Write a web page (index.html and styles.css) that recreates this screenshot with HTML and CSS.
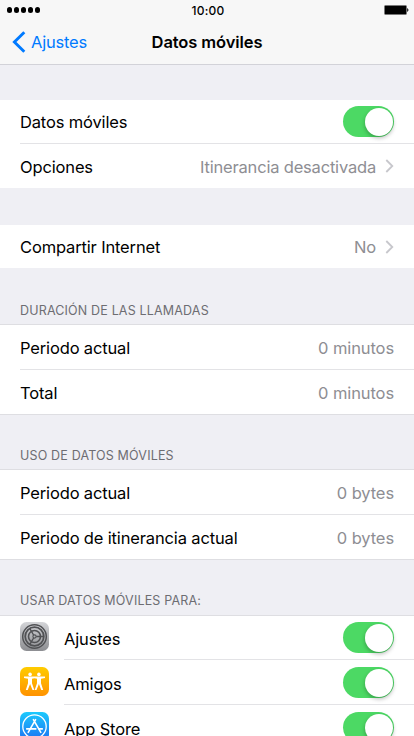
FILE: index.html
```html
<!DOCTYPE html>
<html lang="es">
<head>
<meta charset="utf-8">
<title>Datos móviles</title>
<link rel="stylesheet" href="styles.css">
</head>
<body>
<header class="top">
  <div class="status">
    <span class="signal"><i></i><i></i><i></i><i></i><i></i></span>
    <span class="time">10:00</span>
    <svg class="battery" width="25" height="10" viewBox="0 0 25 10"><rect x=".5" y=".5" width="22" height="9" rx="1" fill="#000" stroke="#777"/><path d="M23.5 3.5Q25 5 23.5 6.5Z" fill="#000" stroke="#000" stroke-width=".5"/></svg>
  </div>
  <nav class="nav">
    <a class="back"><svg width="14" height="22" viewBox="0 0 14 22"><path d="M12.3 1.2 2.4 11l9.9 9.8" fill="none" stroke="#007aff" stroke-width="2.9"/></svg><span>Ajustes</span></a>
    <h1>Datos móviles</h1>
  </nav>
</header>
<main>
  <section class="group first">
    <div class="row"><span class="label">Datos móviles</span><span class="toggle"></span></div>
    <div class="row"><span class="label">Opciones</span><span class="value roam">Itinerancia desactivada</span><svg class="chevron" width="9" height="14" viewBox="0 0 9 14"><path d="m1.3 1 6 6-6 6" fill="none" stroke="#c7c7cc" stroke-width="1.8"/></svg></div>
  </section>
  <section class="group share">
    <div class="row"><span class="label">Compartir Internet</span><span class="value">No</span><svg class="chevron" width="9" height="14" viewBox="0 0 9 14"><path d="m1.3 1 6 6-6 6" fill="none" stroke="#c7c7cc" stroke-width="1.8"/></svg></div>
  </section>
  <h2 class="calls-title">DURACIÓN DE LAS LLAMADAS</h2>
  <section class="group lined">
    <div class="row"><span class="label">Periodo actual</span><span class="value">0 minutos</span></div>
    <div class="row"><span class="label">Total</span><span class="value">0 minutos</span></div>
  </section>
  <h2 class="data-title">USO DE DATOS MÓVILES</h2>
  <section class="group lined">
    <div class="row"><span class="label">Periodo actual</span><span class="value">0 bytes</span></div>
    <div class="row"><span class="label">Periodo de itinerancia actual</span><span class="value">0 bytes</span></div>
  </section>
  <h2 class="apps-title">USAR DATOS MÓVILES PARA:</h2>
  <section class="group lined apps">
    <div class="row">
      <svg class="icon" width="29" height="29" viewBox="0 0 29 29">
        <defs><linearGradient id="gray" x2="0" y2="1"><stop stop-color="#d4d5d8"/><stop offset="1" stop-color="#8c8d91"/></linearGradient></defs>
        <rect width="29" height="29" rx="6.5" fill="url(#gray)"/>
        <g fill="none" stroke="#505154">
          <circle cx="14.5" cy="14.5" r="11.8" stroke-width="1.5"/>
          <circle cx="14.5" cy="14.5" r="9.3" stroke-width="1.8"/>
          <circle cx="14.5" cy="14.5" r="6" stroke-width="1.6"/>
          <circle cx="14.5" cy="14.5" r="1.6" stroke-width="1.1"/>
          <path d="M16.2 14.5H24M13.6 13 9.7 6.3M13.6 16 9.7 22.7" stroke-width="1.4"/>
        </g>
      </svg>
      <span class="label">Ajustes</span><span class="toggle"></span></div>
    <div class="row">
      <svg class="icon" width="29" height="29" viewBox="0 0 29 29">
        <defs><linearGradient id="orange" x2="0" y2="1"><stop stop-color="#fc0"/><stop offset="1" stop-color="#ff9200"/></linearGradient></defs>
        <rect width="29" height="29" rx="6.5" fill="url(#orange)"/>
        <g fill="#fff">
          <circle cx="10.1" cy="7.4" r="1.8"/><circle cx="18.9" cy="7.4" r="1.8"/>
          <path d="M4 9.6h21v1.3l-4 .9v4.4l2.2 6.8h-1.9L18.9 17l-2.4 6h-1.8l2.3-6.8v-4.4l-2.5-.5-2.5.5v4.4l2.3 6.8h-1.8l-2.4-6-2.4 6H5.8L8 16.200v-4.400l-4-.9Z"/>
        </g>
      </svg>
      <span class="label">Amigos</span><span class="toggle"></span></div>
    <div class="row">
      <svg class="icon" width="29" height="29" viewBox="0 0 29 29">
        <defs><linearGradient id="blue" x2="0" y2="1"><stop stop-color="#1bcafd"/><stop offset="1" stop-color="#1d70f2"/></linearGradient></defs>
        <rect width="29" height="29" rx="6.5" fill="url(#blue)"/>
        <g fill="none" stroke="#fff" stroke-linecap="round"><circle cx="14.5" cy="14.5" r="11.7" stroke-width="1.3"/><path d="m13.400 7.700 7.400 12.700M15.600 7.700 8.200 20.400" stroke-width="1.600"/><path d="M6.700 16.900h9.100M19 16.900h3.300" stroke-width="1.600"/></g>
      </svg>
      <span class="label">App Store</span><span class="toggle"></span></div>
  </section>
</main>
</body>
</html>
```
FILE: styles.css
```css
* { box-sizing: border-box; }
html { overflow: hidden; }
body {
  margin: 0;
  height: 736px;
  overflow: hidden;
  background: #efeff4;
  color: #000;
  font: 16.5px/20px Inter, "Liberation Sans", sans-serif;
}
.top { height: 65px; background: #f7f7f7; border-bottom: 1px solid #d2d2d8; }
.status { height: 20px; padding: 1px 5px 0 7px; display: grid; grid-template-columns: 1fr auto 1fr; align-items: center; }
.signal { display: flex; gap: 1.6px; padding-bottom: 1px; }
.signal i { width: 5.4px; height: 5.4px; border-radius: 50%; background: #000; }
.time { font-size: 12px; font-weight: 500; line-height: 18px; letter-spacing: .2px; }
.battery { justify-self: end; margin-bottom: 1px; }
.nav { height: 44px; display: grid; grid-template-columns: 1fr auto 1fr; align-items: center; padding: 0 12px; }
.back { display: flex; align-items: center; gap: 5px; color: #007aff; letter-spacing: -.2px; }
h1 { margin: 0; font-size: 16.5px; font-weight: 600; line-height: 20px; letter-spacing: -.1px; }
.group { background: #fff; }
.first { margin-top: 35px; }
.share { margin-top: 37px; }
.row { height: 44px; display: flex; align-items: center; padding-right: 20px; margin-left: 20px; }
.row + .row { height: 45px; border-top: 1px solid #e3e3e6; }
.first .row:first-child, .share .row { height: 43px; }
.label, .value { padding-top: 2px; letter-spacing: -.15px; }
.first .row:first-child .label, .share .label, .share .value { padding-top: 0; }
.value { margin-left: auto; color: #8e8e93; letter-spacing: -.1px; }
.roam { letter-spacing: -.19px; }
.chevron { margin-left: 9px; }
h2 { margin: 0; padding: 0 20px; font-size: 12.5px; line-height: 16px; font-weight: 400; letter-spacing: .17px; color: #6d6d72; }
.calls-title { height: 56px; padding-top: 35px; }
.data-title { height: 54px; padding-top: 33px; }
.apps-title { height: 55px; padding-top: 33px; }
.lined { border-top: 1px solid #dedee2; border-bottom: 1px solid #dedee2; }
.toggle { flex: none; width: 51px; height: 31px; margin-left: auto; padding: 1.5px; border-radius: 16px; background: #4cd964; display: flex; justify-content: flex-end; }
.toggle::after { content: ""; width: 28px; height: 28px; border-radius: 50%; background: #fff; box-shadow: 0 2px 4px rgba(0,0,0,.28); }
.apps .row { height: 43px; margin-left: 0; padding-left: 20px; }
.apps .row + .row { height: 45px; padding-top: 2px; border-top: 0; background: linear-gradient(#e3e3e6,#e3e3e6) 64px 0 / 100% 1px no-repeat; }
.icon { flex: none; margin-bottom: 2px; }
.apps .label { margin-left: 15px; }
```
